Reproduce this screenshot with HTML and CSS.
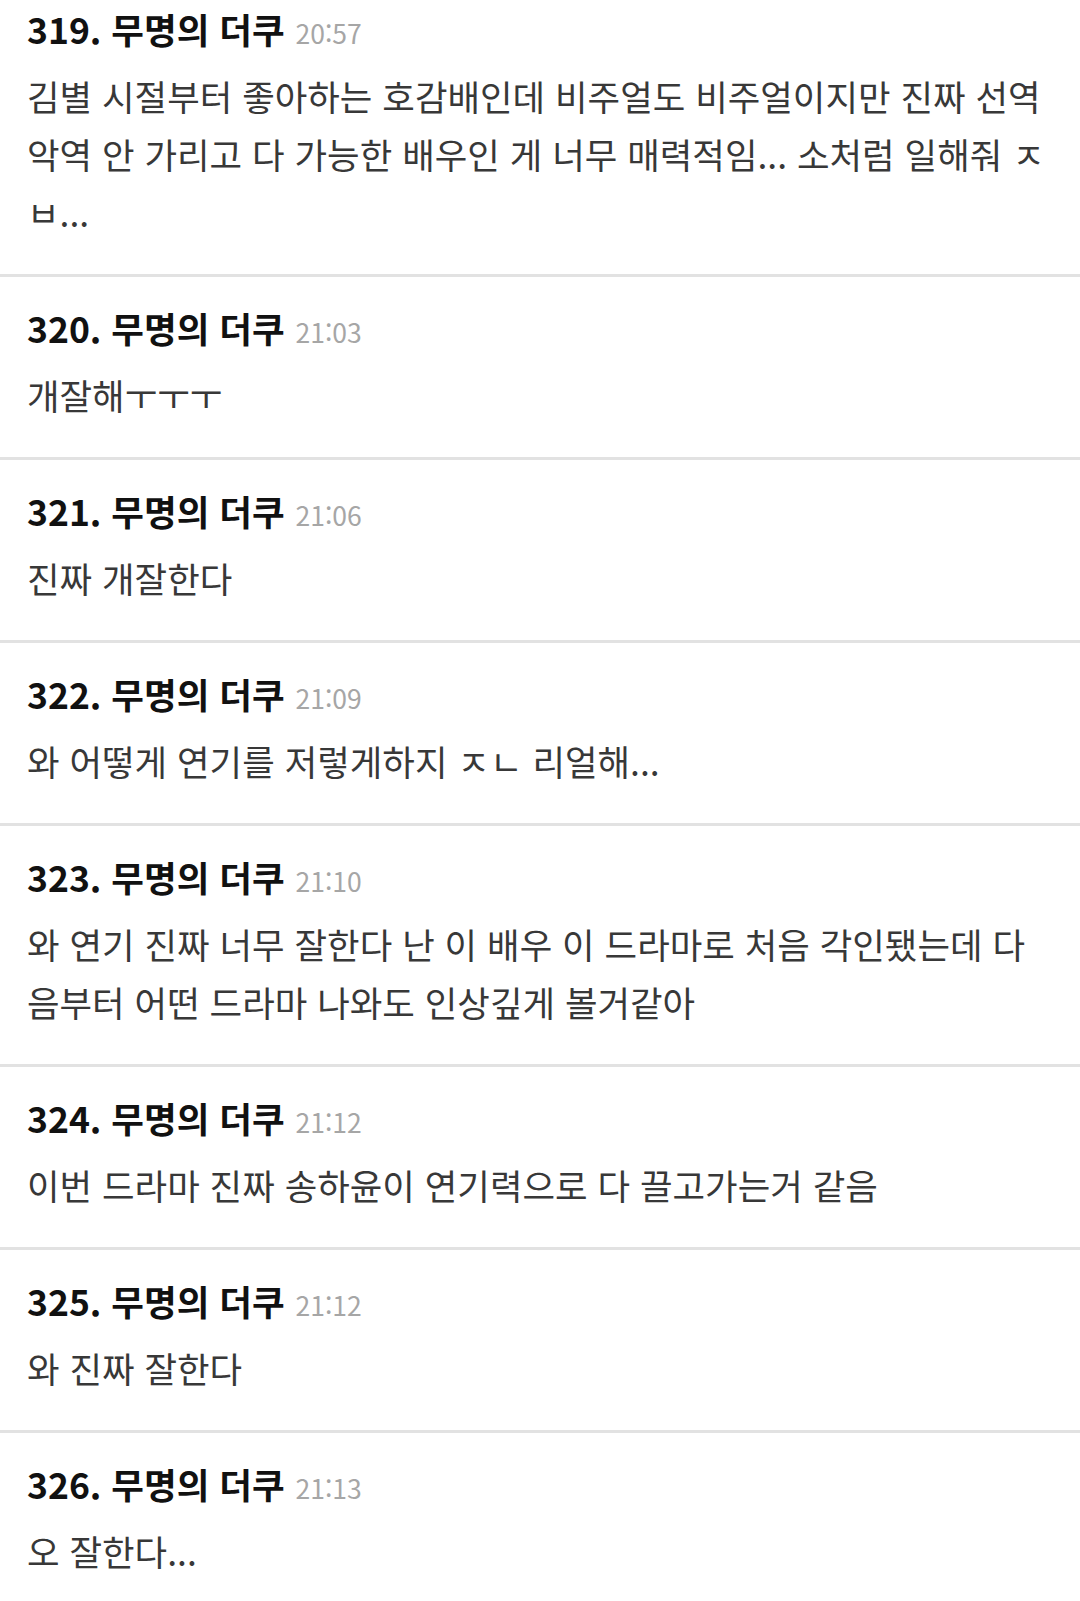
FILE: index.html
```html
<!DOCTYPE html>
<html lang="ko">
<head>
  <meta charset="UTF-8" />
  <title>댓글</title>
  <meta name="viewport" content="width=device-width, initial-scale=1" />
  <link rel="stylesheet" href="styles.css">
</head>
<body>
  <ul class="replies">
    <li class="reply">
      <div class="reply-head">319. 무명의 더쿠 <span class="reply-time">20:57</span></div>
      <p class="reply-body">김별 시절부터 좋아하는 호감배인데 비주얼도 비주얼이지만 진짜 선역 악역 안 가리고 다 가능한 배우인 게 너무 매력적임... 소처럼 일해줘 ㅈㅂ...</p>
    </li>
    <li class="reply">
      <div class="reply-head">320. 무명의 더쿠 <span class="reply-time">21:03</span></div>
      <p class="reply-body">개잘해ㅜㅜㅜ</p>
    </li>
    <li class="reply">
      <div class="reply-head">321. 무명의 더쿠 <span class="reply-time">21:06</span></div>
      <p class="reply-body">진짜 개잘한다</p>
    </li>
    <li class="reply">
      <div class="reply-head">322. 무명의 더쿠 <span class="reply-time">21:09</span></div>
      <p class="reply-body">와 어떻게 연기를 저렇게하지 ㅈㄴ 리얼해...</p>
    </li>
    <li class="reply">
      <div class="reply-head">323. 무명의 더쿠 <span class="reply-time">21:10</span></div>
      <p class="reply-body">와 연기 진짜 너무 잘한다 난 이 배우 이 드라마로 처음 각인됐는데 다음부터 어떤 드라마 나와도 인상깊게 볼거같아</p>
    </li>
    <li class="reply">
      <div class="reply-head">324. 무명의 더쿠 <span class="reply-time">21:12</span></div>
      <p class="reply-body">이번 드라마 진짜 송하윤이 연기력으로 다 끌고가는거 같음</p>
    </li>
    <li class="reply">
      <div class="reply-head">325. 무명의 더쿠 <span class="reply-time">21:12</span></div>
      <p class="reply-body">와 진짜 잘한다</p>
    </li>
    <li class="reply">
      <div class="reply-head">326. 무명의 더쿠 <span class="reply-time">21:13</span></div>
      <p class="reply-body">오 잘한다...</p>
    </li>
  </ul>
</body>
</html>
```

FILE: styles.css
```css
body {
  margin: 0;
  background: #fff;
  font-family: "Noto Sans CJK KR", "Noto Sans", sans-serif;
  color: #333;
}
.replies {
  list-style: none;
  margin: 0;
  padding: 0;
}
.reply {
  padding: 29px 32px 33px 27px;
  border-top: 3px solid #e2e2e2;
}
.reply:first-child {
  padding-top: 7px;
  border-top: none;
}
.reply-head {
  font-size: 35.5px;
  line-height: 44px;
  font-weight: 700;
  color: #111;
  margin-bottom: 16px;
}
.reply-time {
  margin-left: 1px;
  font-size: 26.5px;
  line-height: 1;
  font-weight: 400;
  color: #a6a6a6;
}
.reply-body {
  margin: 0;
  font-size: 35.4px;
  line-height: 58px;
  color: #383838;
}
```
